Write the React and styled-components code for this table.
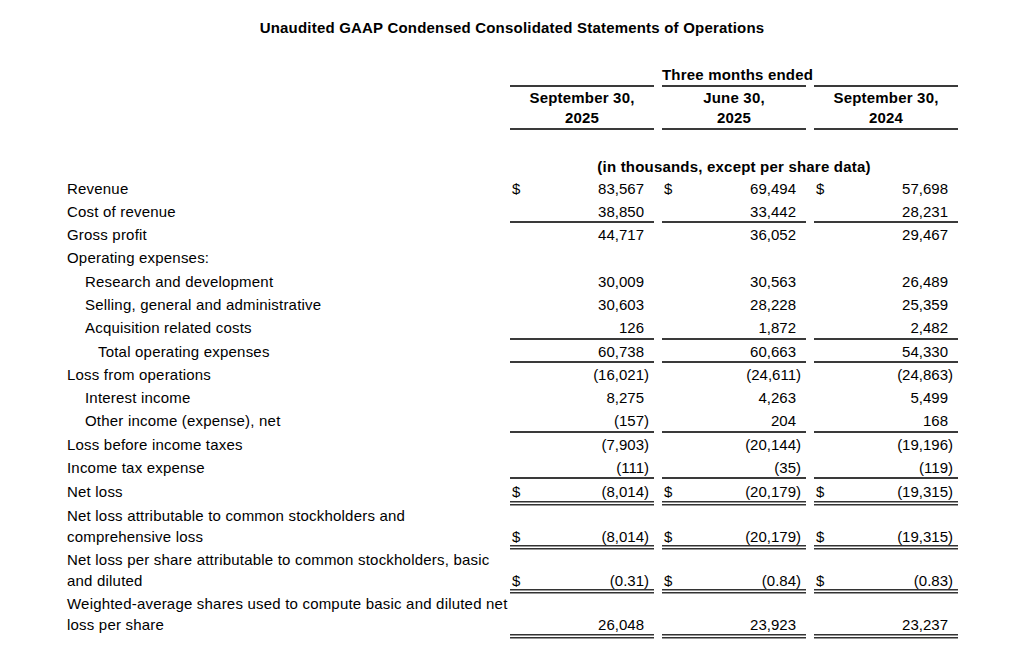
import React from "react";
import styled, { createGlobalStyle } from "styled-components";

const GlobalStyle = createGlobalStyle`
  html, body {
    margin: 0;
    padding: 0;
    background: #fff;
  }
  body {
    font-family: "Liberation Sans", Arial, sans-serif;
    color: #000;
  }
`;

const rows = [
  { label: "Revenue", dollar: true, values: ["83,567", "69,494", "57,698"] },
  { label: "Cost of revenue", values: ["38,850", "33,442", "28,231"], line: "single" },
  { label: "Gross profit", values: ["44,717", "36,052", "29,467"] },
  { label: "Operating expenses:" },
  { label: "Research and development", indent: 1, values: ["30,009", "30,563", "26,489"] },
  { label: "Selling, general and administrative", indent: 1, values: ["30,603", "28,228", "25,359"] },
  { label: "Acquisition related costs", indent: 1, values: ["126", "1,872", "2,482"], line: "single" },
  { label: "Total operating expenses", indent: 2, values: ["60,738", "60,663", "54,330"], line: "single" },
  { label: "Loss from operations", values: ["(16,021)", "(24,611)", "(24,863)"] },
  { label: "Interest income", indent: 1, values: ["8,275", "4,263", "5,499"] },
  { label: "Other income (expense), net", indent: 1, values: ["(157)", "204", "168"], line: "single" },
  { label: "Loss before income taxes", values: ["(7,903)", "(20,144)", "(19,196)"] },
  { label: "Income tax expense", values: ["(111)", "(35)", "(119)"], line: "single" },
  { label: "Net loss", dollar: true, values: ["(8,014)", "(20,179)", "(19,315)"], line: "double" },
  {
    label: ["Net loss attributable to common stockholders and", "comprehensive loss"],
    dollar: true,
    values: ["(8,014)", "(20,179)", "(19,315)"],
    line: "double",
  },
  {
    label: ["Net loss per share attributable to common stockholders, basic", "and diluted"],
    dollar: true,
    values: ["(0.31)", "(0.84)", "(0.83)"],
    line: "double",
  },
  {
    label: ["Weighted-average shares used to compute basic and diluted net", "loss per share"],
    values: ["26,048", "23,923", "23,237"],
    line: "double",
  },
];

// double rule hangs half below the cell, like a ruled ledger
const lineShadow = {
  single: "inset 0 -2px 0 #3a3a3a",
  double:
    "inset 0 -0.5px 0 #fff, inset 0 -2px 0 #333, 0 1px 0 #fff, 0 2.5px 0 #333",
  none: "none",
};

const indents = [0, 18, 31];

export default function App() {
  return (
    <Page>
      <GlobalStyle />
      <Title>Unaudited GAAP Condensed Consolidated Statements of Operations</Title>

      <HeaderRow>
        <Spacer />
        <HeadCell $first />
        <HeadCell>Three months ended</HeadCell>
        <HeadCell />
      </HeaderRow>
      <DateRow>
        <Spacer />
        <DateCell $first>
          September 30,
          <br />
          2025
        </DateCell>
        <DateCell>
          June 30,
          <br />
          2025
        </DateCell>
        <DateCell>
          September 30,
          <br />
          2024
        </DateCell>
      </DateRow>

      <UnitsRow>
        <Spacer />
        <Units>(in thousands, except per share data)</Units>
      </UnitsRow>

      {rows.map((row, i) => {
        const labelLines = Array.isArray(row.label) ? row.label : [row.label];
        const total = row.line === "double";
        return (
          <Row key={i}>
            <Label $indent={indents[row.indent || 0]} $total={total}>
              {labelLines.map((l, j) => (
                <div key={j}>{l}</div>
              ))}
            </Label>
            {[0, 1, 2].map((c) => {
              const v = row.values ? row.values[c] : "";
              return (
                <Cell
                  key={c}
                  $first={c === 0}
                  $total={total}
                  $line={row.values ? row.line || "none" : "none"}
                >
                  <Dollar>{row.dollar ? "$" : ""}</Dollar>
                  <Amount $neg={v.endsWith(")")}>{v}</Amount>
                </Cell>
              );
            })}
          </Row>
        );
      })}
    </Page>
  );
}

const Page = styled.div`
  width: 1024px;
  height: 645px;
  box-sizing: border-box;
  padding: 17px 0 0 67px;
  font-size: 15px;
  letter-spacing: 0.2px;
  overflow: hidden;
`;

const Title = styled.div`
  margin-left: -67px;
  text-align: center;
  font-weight: bold;
  line-height: 22px;
  margin-bottom: 24.5px;
`;

const Spacer = styled.div`
  width: 443px;
  flex: none;
`;

const HeaderRow = styled.div`
  display: flex;
`;

const HeadCell = styled.div`
  width: 144px;
  flex: none;
  margin-left: ${(p) => (p.$first ? "0" : "8px")};
  text-align: center;
  font-weight: bold;
  line-height: 21px;
  height: 21px;
  white-space: nowrap;
  border-bottom: 2px solid #3a3a3a;
`;

const DateRow = styled.div`
  display: flex;
`;

const DateCell = styled(HeadCell)`
  height: auto;
  line-height: 20px;
  padding-top: 1.5px;
`;

const UnitsRow = styled.div`
  display: flex;
  margin-top: 25.5px;
`;

const Units = styled.div`
  width: 448px;
  text-align: center;
  font-weight: bold;
  line-height: 21px;
  white-space: nowrap;
`;

const Row = styled.div`
  display: flex;
  align-items: stretch;
`;

const Label = styled.div`
  width: 443px;
  flex: none;
  box-sizing: border-box;
  padding: ${(p) => (p.$total ? "2px 0 0.3px" : "1px 0 1.3px")};
  padding-left: ${(p) => p.$indent}px;
  line-height: 21px;
  white-space: nowrap;
`;

const Cell = styled.div`
  width: 144px;
  flex: none;
  box-sizing: border-box;
  margin-left: ${(p) => (p.$first ? "0" : "8px")};
  padding: ${(p) => (p.$total ? "2px 10px 0.3px 2px" : "1px 10px 1.3px 2px")};
  display: flex;
  align-items: flex-end;
  justify-content: space-between;
  line-height: 21px;
  letter-spacing: 0;
  box-shadow: ${(p) => lineShadow[p.$line]};
`;

const Dollar = styled.span``;

const Amount = styled.span`
  margin-right: ${(p) => (p.$neg ? "-5px" : "0")};
`;
